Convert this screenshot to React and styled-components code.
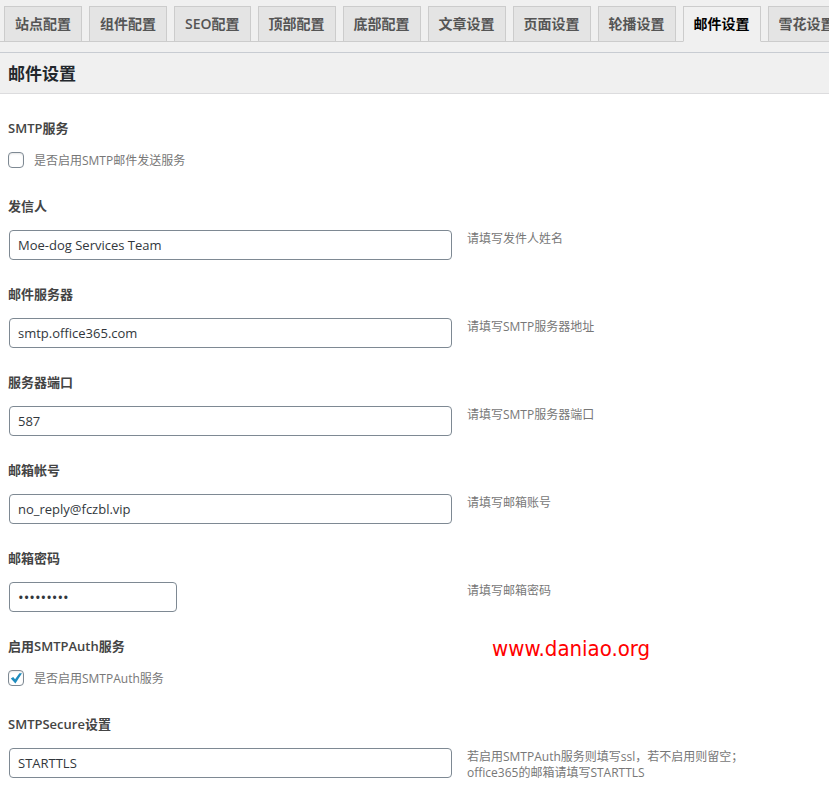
import React, { useState } from "react";
import styled, { createGlobalStyle } from "styled-components";

const GlobalStyle = createGlobalStyle`
  *, *::before, *::after { box-sizing: border-box; }
  body {
    margin: 0;
    background: #fff;
    color: #3c434a;
    font-family: "Open Sans", "Noto Sans CJK SC", sans-serif;
    font-size: 13px;
    overflow-x: hidden;
  }
`;

const TabBar = styled.nav`
  display: flex;
  gap: 7px;
  padding: 6px 4px 0;
  overflow: hidden;
  background: #f0f0f0;
  box-shadow: inset 0 -1px #ccc;
`;

const Tab = styled.a`
  flex: none;
  padding: 5px 10px;
  border: 1px solid #ccc;
  border-bottom-color: ${(p) => (p.$active ? "#f0f0f0" : "#ccc")};
  background: ${(p) => (p.$active ? "#f0f0f0" : "#e4e4e4")};
  color: ${(p) => (p.$active ? "#000" : "#555")};
  font-size: 14px;
  font-weight: 600;
  line-height: 24px;
  text-decoration: none;
  white-space: nowrap;
`;

const Header = styled.header`
  padding-top: 10px;
  background: #f0f0f0;
`;

const Title = styled.h1`
  margin: 0;
  padding: 9px 8px 7px;
  border-top: 1px solid #c8ccd2;
  border-bottom: 1px solid #dcdcde;
  color: #23282d;
  font-size: 17px;
  font-weight: 700;
  line-height: 24px;
`;

const Form = styled.form`
  padding: 26px 8px 0;
`;

const Field = styled.section`
  position: relative;
  padding-bottom: 25px;
`;

const Label = styled.label`
  display: block;
  margin-bottom: 15px;
  color: #444;
  font-weight: 600;
  line-height: 16px;
`;

const Controls = styled.div`
  display: grid;
  grid-template-columns: minmax(0, 445px) minmax(0, 1fr);
  column-gap: 14px;
`;

const TextInput = styled.input`
  width: ${(p) => (p.$narrow ? "168px" : "calc(100% - 2px)")};
  height: 30px;
  margin: 1px;
  padding: 0 8px;
  border: 1px solid #7e8993;
  border-radius: 4px;
  background: #fff;
  color: #32373c;
  font: inherit;
  font-size: ${(p) => (p.type === "password" ? "15px" : "13px")};
`;

const Hint = styled.p`
  max-width: 280px;
  margin: 2px 0 0;
  color: #777;
  font-size: 12px;
  line-height: 16px;
`;

const CheckRow = styled.label`
  display: flex;
  align-items: flex-start;
  gap: 10px;
  min-height: 21px;
  margin-top: 16px;
  color: #777;
  font-size: 12px;
  line-height: 18px;
`;

const CheckBox = styled.span`
  display: grid;
  flex: none;
  width: 16px;
  height: 16px;

  > * { grid-area: 1 / 1; }
`;

const CheckInput = styled.input`
  appearance: none;
  width: 16px;
  height: 16px;
  margin: 0;
  border: 1px solid #7e8993;
  border-radius: 4px;
  background: #fff;
  box-shadow: inset 0 1px 2px rgba(0, 0, 0, 0.1);
`;

const CheckMark = styled.svg`
  z-index: 1;
  width: 16px;
  height: 16px;
  pointer-events: none;
`;

const Heading = styled.h2`
  margin: 0;
  color: #444;
  font-size: 13px;
  font-weight: 600;
  line-height: 16px;
`;

const SiteMark = styled.a`
  position: absolute;
  top: -3px;
  left: 484px;
  color: #f00;
  font-family: "DejaVu Sans Condensed", "Noto Sans", sans-serif;
  font-size: 22px;
  line-height: 28px;
  text-decoration: none;
`;

const tabs = ["站点配置", "组件配置", "SEO配置", "顶部配置", "底部配置", "文章设置", "页面设置", "轮播设置", "邮件设置", "雪花设置"];

function TextField({ id, label, hint, value, type = "text", narrow }) {
  return (
    <Field>
      <Label htmlFor={id}>{label}</Label>
      <Controls>
        <TextInput id={id} type={type} defaultValue={value} $narrow={narrow} aria-describedby={`${id}-hint`} />
        <Hint id={`${id}-hint`}>{hint}</Hint>
      </Controls>
    </Field>
  );
}

function CheckField({ id, label, hint, initial = false, children }) {
  const [checked, setChecked] = useState(initial);
  return (
    <Field>
      <Heading>{label}</Heading>
      <CheckRow htmlFor={id}>
        <CheckBox>
          <CheckInput id={id} type="checkbox" checked={checked} onChange={(e) => setChecked(e.target.checked)} />
          {checked && (
            <CheckMark viewBox="0 0 16 16" aria-hidden="true">
              <path d="M2.8 8.4 5.2 7 7.1 9.3 11.4 3.3 14 3.3 7.4 13.4Z" fill="#1e8cbe" />
            </CheckMark>
          )}
        </CheckBox>
        {hint}
      </CheckRow>
      {children}
    </Field>
  );
}

export default function App() {
  return (
    <>
      <GlobalStyle />
      <TabBar>
        {tabs.map((name) => (
          <Tab key={name} href="#" $active={name === "邮件设置"}>{name}</Tab>
        ))}
      </TabBar>
      <Header>
        <Title>邮件设置</Title>
      </Header>
      <Form>
        <CheckField id="smtp" label="SMTP服务" hint="是否启用SMTP邮件发送服务" />
        <TextField id="sender" label="发信人" value="Moe-dog Services Team" hint="请填写发件人姓名" />
        <TextField id="server" label="邮件服务器" value="smtp.office365.com" hint="请填写SMTP服务器地址" />
        <TextField id="port" label="服务器端口" value="587" hint="请填写SMTP服务器端口" />
        <TextField id="account" label="邮箱帐号" value="no_reply@fczbl.vip" hint="请填写邮箱账号" />
        <TextField id="password" label="邮箱密码" type="password" value="123456789" hint="请填写邮箱密码" narrow />
        <CheckField id="auth" label="启用SMTPAuth服务" hint="是否启用SMTPAuth服务" initial>
          <SiteMark href="#">www.daniao.org</SiteMark>
        </CheckField>
        <TextField
          id="secure"
          label="SMTPSecure设置"
          value="STARTTLS"
          hint={<>若启用SMTPAuth服务则填写ssl，若不启用则留空；<br />office365的邮箱请填写STARTTLS</>}
        />
      </Form>
    </>
  );
}
